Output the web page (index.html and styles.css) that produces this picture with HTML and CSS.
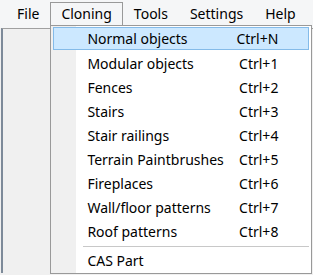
FILE: index.html
```html
<!DOCTYPE html>
<html lang="en">
<head>
    <meta charset="UTF-8">
    <title>Cloning menu</title>
    <link rel="stylesheet" href="styles.css">
</head>
<body>
    <div class="menubar">
        <span class="menu-title">File</span>
        <span class="menu-title open">Cloning
            <div class="dropdown">
                <div class="item active"><span>Normal objects</span><span>Ctrl+N</span></div>
                <div class="item"><span>Modular objects</span><span>Ctrl+1</span></div>
                <div class="item"><span>Fences</span><span>Ctrl+2</span></div>
                <div class="item"><span>Stairs</span><span>Ctrl+3</span></div>
                <div class="item"><span>Stair railings</span><span>Ctrl+4</span></div>
                <div class="item"><span>Terrain Paintbrushes</span><span>Ctrl+5</span></div>
                <div class="item"><span>Fireplaces</span><span>Ctrl+6</span></div>
                <div class="item"><span>Wall/floor patterns</span><span>Ctrl+7</span></div>
                <div class="item"><span>Roof patterns</span><span>Ctrl+8</span></div>
                <div class="separator"></div>
                <div class="item"><span>CAS Part</span></div>
            </div>
        </span>
        <span class="menu-title">Tools</span>
        <span class="menu-title">Settings</span>
        <span class="menu-title">Help</span>
    </div>
    <div class="panel"></div>
</body>
</html>
```

FILE: styles.css
```css
body {
    margin: 0;
    height: 275px;
    overflow: hidden;
    background-color: #f0f0f0;
    font-family: 'Noto Sans', 'Open Sans', sans-serif;
    font-size: 14px;
    color: #000;
}

.menubar {
    display: flex;
    height: 26px;
    padding: 2px 0 0 6px;
    background-color: #f5f6f7;
}

.menu-title {
    position: relative;
    height: 22px;
    line-height: 22px;
    padding: 0 10px;
    border: 1px solid transparent;
    border-bottom: none;
}

.menu-title.open {
    border-color: #999;
}

.dropdown {
    position: absolute;
    top: 100%;
    left: -1px;
    width: 262px;
    height: 249px;
    box-sizing: border-box;
    padding: 1px;
    border: 1px solid #999;
    background: linear-gradient(to right, #f0f0f0 25px, #fff 25px);
    z-index: 10;
}

.item {
    display: flex;
    justify-content: space-between;
    height: 24px;
    line-height: 23px;
    margin: 0 1px;
    padding: 0 30px 0 33px;
    border: 1px solid transparent;
    box-sizing: border-box;
}

.item.active {
    height: 23px;
    margin-bottom: 1px;
    line-height: 22px;
    background-color: #cce8ff;
    border-color: #84bbe9;
}

.separator {
    height: 1px;
    margin: 3px 1px 1px 31px;
    background-color: #c8c8c8;
}

.panel {
    height: 244px;
    margin-left: 1px;
    border-top: 1px solid #a0a0a0;
    border-left: 2px solid #7d8a99;
}
```
